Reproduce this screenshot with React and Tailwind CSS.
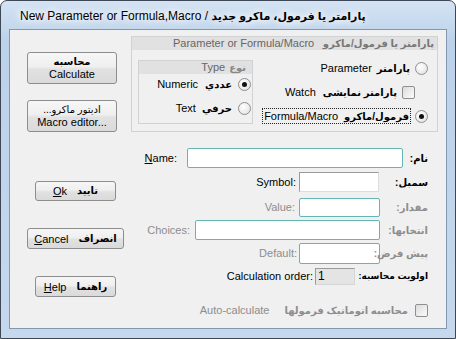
import React from "react";

const ui = "font-['Liberation_Sans','DejaVu_Sans',sans-serif]";

const Radio = ({ checked }) => (
  <span className="w-[13px] h-[13px] shrink-0 rounded-full border border-[#8e8f8f] bg-[radial-gradient(circle_at_40%_35%,#ffffff,#dedede)] flex items-center justify-center">
    {checked && <span className="w-[5px] h-[5px] rounded-full bg-[#111]" />}
  </span>
);

const Check = () => (
  <span className="block w-[13px] h-[13px] shrink-0 rounded-[2px] border border-[#8e8f8f] bg-[linear-gradient(135deg,#dcdcdc,#fbfbfb)]" />
);

const Btn = ({ className, children }) => (
  <div
    className={
      "flex items-center justify-center rounded-[3px] border border-[#8d8d8d] bg-[linear-gradient(#f6f6f6,#efefef_45%,#e1e1e1_55%,#dadada)] text-[11px] leading-[12px] text-black " +
      className
    }
  >
    {children}
  </div>
);

const Fa = ({ className = "", children }) => (
  <span dir="rtl" className={"shrink-0 text-[10px] font-bold " + className}>
    {children}
  </span>
);

// right-hand Persian label cell, text ends 18px before the client edge
const FaLabel = ({ w, size = "text-[10px]", children }) => (
  <span dir="rtl" className={"shrink-0 block pr-[18px] text-right font-bold " + size + " " + w}>
    {children}
  </span>
);

const Field = ({ className }) => (
  <div className={"shrink-0 rounded-[2px] border border-[#66b5b5] bg-white " + className} />
);

export default function App() {
  return (
    <div
      className={
        ui +
        " w-[456px] h-[339px] flex flex-col overflow-hidden whitespace-nowrap rounded-t-[7px] border border-[#3d4756] bg-[linear-gradient(#d4e3f3,#bcd2ea_40px,#c5d8ed)] text-[11px] text-black"
      }
    >
      {/* title bar */}
      <div className="h-[28px] flex items-center pl-[19px] pt-[2px] text-[12px]">
        <span className="[text-shadow:0_0_6px_#ffffff,0_0_10px_#ffffff,0_0_14px_#ffffff]">
          New Parameter or Formula,Macro /{" "}
          <span className="font-bold text-[11px]" dir="rtl">پارامتر یا فرمول، ماکرو جدید</span>
        </span>
      </div>

      {/* client area */}
      <div className="mx-[8px] h-[300px] border border-[#8397b1] bg-[#f0f0f0] flex flex-col">
        {/* top section */}
        <div className="flex mt-[6px]">
          <div className="ml-[17px] mt-[16px] flex flex-col gap-[16px]">
            <Btn className="flex-col w-[90px] h-[32px]">
              <Fa>محاسبه</Fa>
              <span>Calculate</span>
            </Btn>
            <Btn className="flex-col w-[90px] h-[32px]">
              <Fa className="font-normal">ادیتور ماکرو...</Fa>
              <span>Macro editor...</span>
            </Btn>
          </div>

          <div className="ml-[14px] w-[307px] h-[96px] border border-[#cfd3d6] flex flex-col">
            <div className="h-[13px] bg-[#e1e1e1] flex items-center pl-[41px] pr-[3px] text-[#666] leading-[13px]">
              <span>Parameter or Formula/Macro</span>
              <Fa className="ml-auto text-[#777]">پارامتر یا فرمول/ماکرو</Fa>
            </div>
            <div className="flex flex-1">
              {/* type group */}
              <div className="shrink-0 ml-[6px] mt-[10px] w-[115px] h-[64px] border border-[#cfd3d6] flex flex-col">
                <div className="h-[13px] bg-[#e1e1e1] flex justify-end items-center pr-[6px] text-[#666] leading-[13px]">
                  <span>Type</span>
                  <Fa className="ml-[4px] text-[#888]">نوع</Fa>
                </div>
                <div className="mt-[1px] h-[18px] flex justify-end items-center pr-[1px]">
                  <span>Numeric</span>
                  <Fa className="ml-[7px]">عددي</Fa>
                  <span className="ml-[6px] shrink-0"><Radio checked /></span>
                </div>
                <div className="mt-[6px] h-[18px] flex justify-end items-center pr-[1px]">
                  <span>Text</span>
                  <Fa className="ml-[6px]">حرفي</Fa>
                  <span className="ml-[6px] shrink-0"><Radio /></span>
                </div>
              </div>

              {/* kind radios */}
              <div className="flex-1 flex flex-col items-end pr-[9px] pt-[9px] gap-[6px]">
                <div className="h-[18px] flex items-center">
                  <span>Parameter</span>
                  <Fa className="ml-[5px]">پارامتر</Fa>
                  <span className="ml-[5px] shrink-0"><Radio /></span>
                </div>
                <div className="h-[18px] flex items-center pr-[13px]">
                  <span>Watch</span>
                  <Fa className="ml-[7px]">پارامتر نمایشی</Fa>
                  <span className="ml-[5px] shrink-0"><Check /></span>
                </div>
                <div className="h-[18px] flex items-center">
                  <span className="h-[16px] flex items-center px-[1px] border border-dotted border-[#222]">
                    <span>Formula/Macro</span>
                    <Fa className="ml-[6px]">فرمول/ماکرو</Fa>
                  </span>
                  <span className="ml-[4px] shrink-0"><Radio checked /></span>
                </div>
              </div>
            </div>
          </div>
        </div>

        {/* bottom section */}
        <div className="flex mt-[15px]">
          <div className="w-[130px] shrink-0 flex flex-col">
            <Btn className="ml-[25px] mt-[34px] w-[81px] h-[20px] gap-[10px]">
              <span><u>O</u>k</span>
              <Fa>تاييد</Fa>
            </Btn>
            <Btn className="ml-[17px] mt-[27px] w-[97px] h-[21px] gap-[10px]">
              <span><u>C</u>ancel</span>
              <Fa>انصراف</Fa>
            </Btn>
            <Btn className="ml-[25px] mt-[27px] w-[81px] h-[21px] gap-[10px]">
              <span><u>H</u>elp</span>
              <Fa>راهنما</Fa>
            </Btn>
          </div>

          <div className="flex-1 flex flex-col">
            <div className="mt-[1px] h-[20px] flex justify-end items-center">
              <span className="mr-[10px]"><u>N</u>ame:</span>
              <Field className="w-[216px] h-[20px]" />
              <FaLabel w="w-[43px]">نام:</FaLabel>
            </div>
            <div className="mt-[4px] h-[20px] flex justify-end items-center">
              <span className="mr-[3px]">Symbol:</span>
              <div className="shrink-0 w-[80px] h-[20px] border border-[#9a9a9a] border-r-[#dcdcdc] border-b-[#dcdcdc] bg-white" />
              <FaLabel w="w-[67px]">سمبل:</FaLabel>
            </div>
            <div className="mt-[5px] h-[20px] flex justify-end items-center text-[#8d8d8d]">
              <span className="mr-[4px]">Value:</span>
              <Field className="w-[81px] h-[19px]" />
              <FaLabel w="w-[66px]">مقدار:</FaLabel>
            </div>
            <div className="mt-[3px] h-[20px] flex justify-end items-center text-[#8d8d8d]">
              <span className="mr-[5px]">Choices:</span>
              <Field className="w-[185px] h-[20px]" />
              <FaLabel w="w-[66px]">انتخابها:</FaLabel>
            </div>
            <div className="mt-[3px] h-[21px] flex justify-end items-center text-[#8d8d8d]">
              <span className="mr-[2px]">Default:</span>
              <Field className="w-[81px] h-[21px]" />
              <FaLabel w="w-[66px]">پیش فرض:</FaLabel>
            </div>
            <div className="mt-[4px] h-[17px] flex justify-end items-center">
              <span className="mr-[2px]">Calculation order:</span>
              <div className="shrink-0 w-[40px] h-[17px] border border-[#9a9a9a] border-r-[#d6d6d6] border-b-[#d6d6d6] bg-[#e4e4e4] pl-[2px] leading-[15px] text-[12px]">
                1
              </div>
              <FaLabel w="w-[91px]" size="text-[9px]">اولويت محاسبه:</FaLabel>
            </div>
            <div className="mt-[17px] h-[16px] flex justify-end items-center pr-[18px] text-[#8d8d8d]">
              <span className="mr-[15px]">Auto-calculate</span>
              <Fa className="mr-[7px]">محاسبه اتوماتیک فرمولها</Fa>
              <Check />
            </div>
          </div>
        </div>
      </div>
      <div className="flex-1" />
    </div>
  );
}
